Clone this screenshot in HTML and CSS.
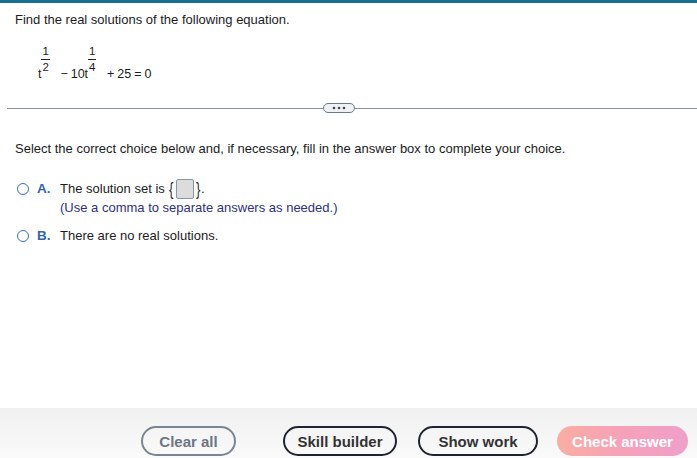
FILE: index.html
```html
<!DOCTYPE html>
<html lang="en">
<head>
    <meta charset="UTF-8">
    <meta name="viewport" content="width=device-width, initial-scale=1.0">
    <title>Question</title>
    <link rel="stylesheet" href="styles.css">
</head>
<body>
    <div class="top-bar"></div>

    <div class="question">
        <p class="prompt">Find the real solutions of the following equation.</p>

        <div class="equation">
            t<span class="frac"><span class="num">1</span><span class="den">2</span></span>
            <span class="op">&minus;</span>10t<span class="frac"><span class="num">1</span><span class="den">4</span></span>
            <span class="op">+</span>25<span class="op">=</span>0
        </div>

        <div class="divider">
            <span class="more">
                <svg width="14" height="4" viewBox="0 0 14 4"><circle cx="2" cy="2" r="1.3" fill="#3f4a56"/><circle cx="7" cy="2" r="1.3" fill="#3f4a56"/><circle cx="12" cy="2" r="1.3" fill="#3f4a56"/></svg>
            </span>
        </div>

        <p class="instructions">Select the correct choice below and, if necessary, fill in the answer box to complete your choice.</p>

        <div class="choices">
            <div class="choice">
                <span class="radio"></span>
                <span class="letter">A.</span>
                <div class="choice-body">
                    <div class="first-line">The solution set is <span class="brace">{</span><span class="answer-box"></span><span class="brace">}</span>.</div>
                    <div class="hint">(Use a comma to separate answers as needed.)</div>
                </div>
            </div>
            <div class="choice choice-b">
                <span class="radio"></span>
                <span class="letter">B.</span>
                <div class="choice-body">
                    <div class="first-line">There are no real solutions.</div>
                </div>
            </div>
        </div>
    </div>

    <div class="footer">
        <button class="btn btn-clear">Clear all</button>
        <button class="btn btn-dark btn-skill">Skill builder</button>
        <button class="btn btn-dark btn-work">Show work</button>
        <button class="btn btn-check">Check answer</button>
    </div>
</body>
</html>
```

FILE: styles.css
```css
html, body {
    height: 100%;
}
body {
    margin: 0;
    font-family: "Liberation Sans", Arial, sans-serif;
    font-size: 13px;
    color: #1c1c1c;
    background-color: white;
    display: flex;
    flex-direction: column;
    overflow: hidden;
}
.top-bar {
    height: 3px;
    background-color: #1a6f8e;
}
.question {
    flex: 1;
}
.prompt {
    margin: 0;
    padding: 9px 0 0 15px;
    line-height: 16px;
}
.equation {
    padding-left: 38px;
    margin-top: 17px;
    line-height: 16px;
    font-size: 12.5px;
}
.frac {
    display: inline-flex;
    flex-direction: column;
    align-items: center;
    font-size: 11.5px;
    line-height: 12px;
    vertical-align: 23px;
    margin-right: 4px;
}
.frac .num {
    border-bottom: 1px solid #222;
    padding: 0 1px 2px;
}
.frac .den {
    padding-top: 1px;
}
.op {
    margin: 0 3px;
}
.divider {
    display: flex;
    align-items: center;
    margin: 21px 0 0 7px;
}
.divider::before,
.divider::after {
    content: "";
    height: 1px;
    background-color: #8994a0;
}
.divider::before {
    width: 316px;
}
.divider::after {
    flex: 1;
}
.more {
    width: 32px;
    height: 10px;
    box-sizing: border-box;
    border: 1.5px solid #6a7888;
    border-radius: 6px;
    background-color: #eef2f5;
    display: flex;
    align-items: center;
    justify-content: center;
}
.instructions {
    margin: 28px 0 0 15px;
    line-height: 16px;
}
.choices {
    margin-top: 22px;
}
.choice {
    display: flex;
    align-items: flex-start;
}
.choice-b {
    margin-top: 9px;
}
.radio {
    width: 12px;
    height: 12px;
    box-sizing: border-box;
    border: 1.5px solid #3a6cc0;
    border-radius: 50%;
    margin: 4px 0 0 17px;
}
.letter {
    width: 23px;
    margin: 2px 0 0 8px;
    line-height: 16px;
    font-weight: bold;
    font-size: 13.5px;
    color: #3565b0;
}
.first-line {
    line-height: 20px;
    display: flex;
    align-items: center;
    white-space: pre;
}
.brace {
    font-size: 19px;
    line-height: 20px;
    font-weight: 300;
    color: #333;
    transform: scaleX(0.7);
}
.answer-box {
    width: 18px;
    height: 20px;
    box-sizing: border-box;
    background-color: #dcdcdc;
    border: 1px solid #8796a6;
    border-radius: 2px;
    margin: 0 1px;
}
.hint {
    line-height: 18px;
    color: #2e3180;
}
.footer {
    height: 50px;
    flex-shrink: 0;
    background: linear-gradient(#f0f0f0, #fafafa);
    display: flex;
    align-items: flex-start;
    padding: 18px 9px 0 0;
    box-sizing: border-box;
}
.btn {
    height: 30px;
    border-radius: 15px;
    font-family: "Liberation Sans", Arial, sans-serif;
    font-size: 15px;
    font-weight: bold;
    background-color: transparent;
    padding: 0;
    cursor: pointer;
}
.btn-clear {
    width: 95px;
    margin-left: 141px;
    border: 2px solid #7b8493;
    color: #6e7684;
}
.btn-dark {
    border: 2px solid #1e2530;
    color: #333;
}
.btn-skill {
    width: 114px;
    margin-left: 47px;
}
.btn-work {
    width: 120px;
    margin-left: 21px;
}
.btn-check {
    width: 131px;
    margin-left: auto;
    border: none;
    color: white;
    background: linear-gradient(90deg, #f9aea2, #f6a0bb 55%, #eea0c9);
}
```
